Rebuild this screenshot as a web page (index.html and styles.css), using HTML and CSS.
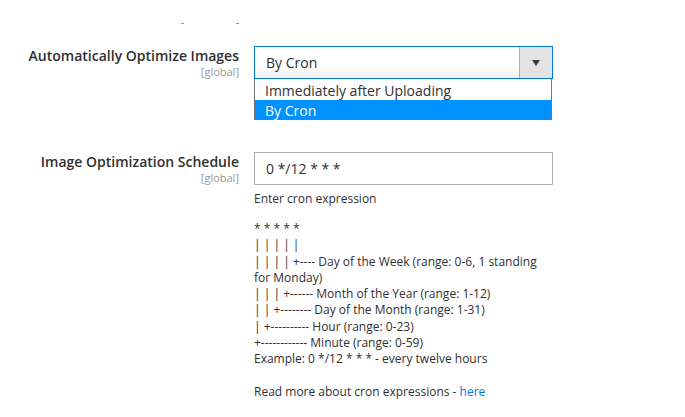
FILE: index.html
```html
<!DOCTYPE html>
<html>
<head>
<meta charset="utf-8">
<link rel="stylesheet" href="styles.css">
</head>
<body>
<div class="page">
  <div class="top-marks"><span class="mark"></span><span class="mark"></span></div>
  <div class="row row-first">
    <div class="label">
      <div class="label-title">Automatically Optimize Images</div>
      <div class="scope">[global]</div>
    </div>
    <div class="control">
      <div class="select">
        <div class="select-value">By Cron</div>
        <div class="select-arrow"><span class="triangle"></span></div>
        <div class="options">
          <div class="option">Immediately after Uploading</div>
          <div class="option option-selected">By Cron</div>
        </div>
      </div>
    </div>
  </div>
  <div class="row">
    <div class="label">
      <div class="label-title">Image Optimization Schedule</div>
      <div class="scope">[global]</div>
    </div>
    <div class="control">
      <div class="input">0 */12 * * *</div>
      <div class="note">Enter cron expression</div>
      <div class="comment">* * * * *<br>| | | | |<br>| | | | +---- Day of the Week (range: 0-6, 1 standing for Monday)<br>| | | +------ Month of the Year (range: 1-12)<br>| | +-------- Day of the Month (range: 1-31)<br>| +---------- Hour (range: 0-23)<br>+------------ Minute (range: 0-59)<br>Example: 0 */12 * * * - every twelve hours<br><br>Read more about cron expressions - <a class="link" href="#">here</a></div>
    </div>
  </div>
</div>
</body>
</html>
```
FILE: styles.css
```css
html, body {
  margin: 0;
  padding: 0;
  background: #ffffff;
}
body {
  font-family: "Open Sans", "DejaVu Sans", sans-serif;
  color: #303030;
}
.page {
  width: 685px;
  height: 417px;
  overflow: hidden;
}
.top-marks {
  height: 46px;
  box-sizing: border-box;
  padding-top: 23px;
  padding-left: 181px;
  display: flex;
  align-items: flex-start;
  gap: 52px;
}
.mark {
  display: block;
  width: 3px;
  height: 1px;
  background: #9a9a9a;
}
.row {
  display: flex;
  align-items: flex-start;
}
.row-first {
  margin-bottom: 73px;
}
.label {
  width: 240px;
  box-sizing: border-box;
  padding-right: 1px;
  padding-top: 1px;
  text-align: right;
}
.label-title {
  font-size: 14px;
  font-weight: 600;
  line-height: 18px;
  color: #303030;
}
.scope {
  font-size: 11px;
  line-height: 13px;
  color: #999999;
}
.control {
  margin-left: 14px;
  width: 299px;
}
.select {
  position: relative;
  height: 33px;
  box-sizing: border-box;
  border: 1px solid #007bdb;
  display: flex;
  background: linear-gradient(to bottom, #ffffff 0%, #ffffff 60%, #eeeeee 100%);
}
.select-value {
  flex: 1;
  padding-left: 11px;
  font-size: 14px;
  line-height: 31px;
  color: #303030;
}
.select-arrow {
  width: 33px;
  box-sizing: border-box;
  border-left: 1px solid #adadad;
  background: #e3e3e3;
  display: flex;
  align-items: center;
  justify-content: center;
}
.triangle {
  display: block;
  width: 0;
  height: 0;
  border-top: 6px solid #41362f;
  border-left: 4px solid transparent;
  border-right: 4px solid transparent;
}
.options {
  position: absolute;
  top: 32px;
  left: -1px;
  width: 298px;
  box-sizing: border-box;
  background: #ffffff;
  border: 1px solid #767676;
  border-top: none;
  border-bottom: none;
  padding-top: 1px;
}
.option {
  height: 20px;
  line-height: 21px;
  padding-left: 10px;
  font-size: 14px;
  color: #303030;
}
.option-selected {
  background: #0091ff;
  color: #ffffff;
}
.input {
  height: 33px;
  box-sizing: border-box;
  border: 1px solid #adadad;
  padding-left: 11px;
  font-size: 14px;
  line-height: 31px;
  color: #303030;
}
.note {
  margin-top: 6px;
  font-size: 12px;
  line-height: 16px;
  color: #303030;
}
.comment {
  margin-top: 14px;
  font-size: 12px;
  line-height: 16.3px;
  color: #303030;
}
.link {
  color: #007bdb;
  text-decoration: none;
}
```
